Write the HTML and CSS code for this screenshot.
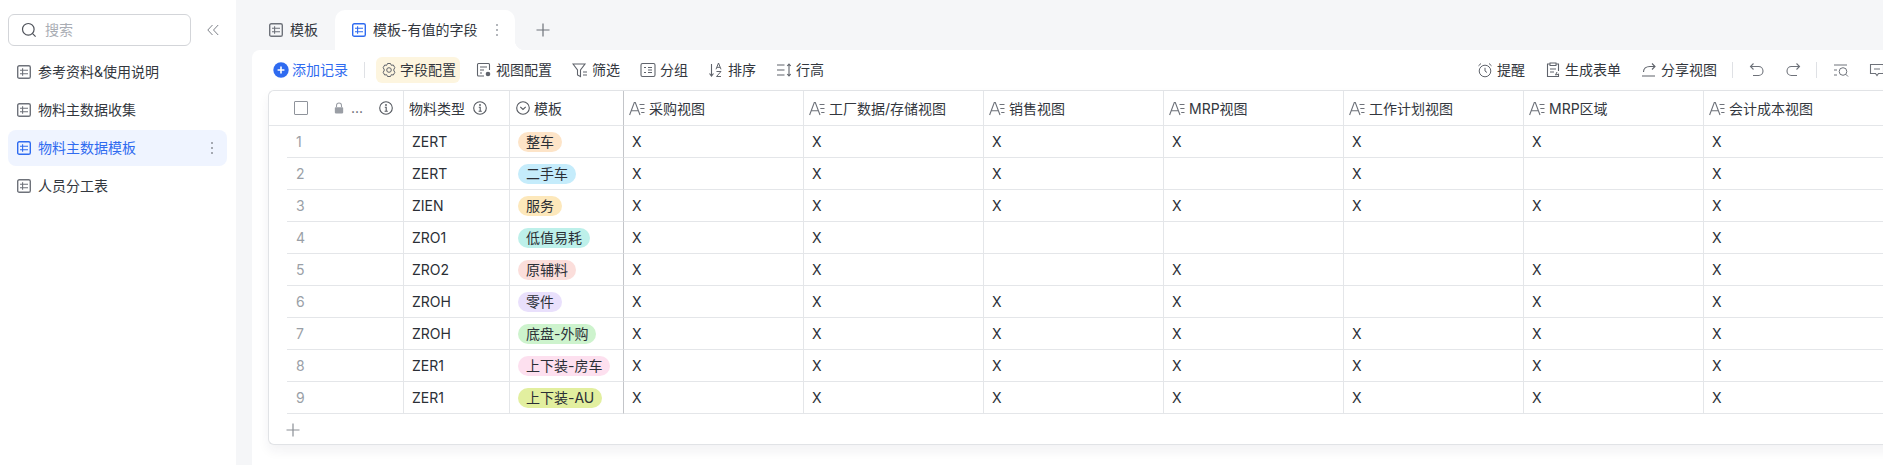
FILE: index.html
```html
<!DOCTYPE html>
<html lang="zh">
<head>
<meta charset="utf-8">
<title>物料主数据模板</title>
<link rel="stylesheet" href="styles.css">
</head>
<body>
<svg class="defs" width="0" height="0">
  <symbol id="sheet" viewBox="0 0 14 14"><rect x="0.7" y="0.7" width="12.6" height="12.6" rx="1.6" fill="none" stroke="currentColor" stroke-width="1.4"/><path d="M3 5.200h8M3 8.800h8M5.600 3.200v7.600" fill="none" stroke="currentColor" stroke-width="1.100"/></symbol>
  <symbol id="textf" viewBox="0 0 16 15"><path d="M.6 14 5.300 1.500h1L11 14M2.400 9.800h7" fill="none" stroke="currentColor" stroke-width="1.100"/><path d="M10.500 3.500h5M11.300 7.500h4.200M12.200 11.500h3.300" fill="none" stroke="currentColor" stroke-width="1.100"/></symbol>
  <symbol id="info" viewBox="0 0 14 14"><circle cx="7" cy="7" r="6.3" fill="none" stroke="currentColor" stroke-width="1.1"/><path d="M5.8 6.2H7.2V10.2M5.6 10.2h3.2" fill="none" stroke="currentColor" stroke-width="1.1"/><circle cx="7" cy="4" r=".9" fill="currentColor"/></symbol>
  <symbol id="dots" viewBox="0 0 4 14"><circle cx="2" cy="2" r="1" fill="currentColor"/><circle cx="2" cy="7" r="1" fill="currentColor"/><circle cx="2" cy="12" r="1" fill="currentColor"/></symbol>
</svg>

<div class="app">
  <aside class="sidebar">
    <div class="search-row">
      <div class="search">
        <svg class="ic-search" viewBox="0 0 16 16"><circle cx="7.3" cy="7.3" r="5.8" fill="none" stroke="currentColor" stroke-width="1.2"/><path d="M11.6 11.6 14.6 14.6" stroke="currentColor" stroke-width="1.2"/></svg>
        <span>搜索</span>
      </div>
      <svg class="collapse" viewBox="0 0 12 12"><path d="M5.5 1 .8 6l4.7 5M11.2 1 6.5 6l4.7 5" fill="none" stroke="currentColor" stroke-width="1"/></svg>
    </div>
    <nav class="nav">
      <div class="nav-item"><svg class="ic14"><use href="#sheet"/></svg><span>参考资料&amp;使用说明</span></div>
      <div class="nav-item"><svg class="ic14"><use href="#sheet"/></svg><span>物料主数据收集</span></div>
      <div class="nav-item active"><svg class="ic14"><use href="#sheet"/></svg><span>物料主数据模板</span><svg class="dots"><use href="#dots"/></svg></div>
      <div class="nav-item"><svg class="ic14"><use href="#sheet"/></svg><span>人员分工表</span></div>
    </nav>
  </aside>

  <main class="main">
    <div class="tabs">
      <div class="tab"><svg class="ic14"><use href="#sheet"/></svg><span>模板</span></div>
      <div class="tab current"><svg class="ic14 blue"><use href="#sheet"/></svg><span>模板-有值的字段</span><svg class="dots"><use href="#dots"/></svg></div>
      <svg class="tab-add" viewBox="0 0 14 14"><path d="M7 .5v13M.5 7h13" stroke="currentColor" stroke-width="1.2"/></svg>
    </div>

    <section class="card">
      <div class="toolbar">
        <div class="tool add"><svg class="ic15" viewBox="0 0 15 15"><circle cx="7.5" cy="7.5" r="7.2" fill="#2f6bf0"/><path d="M7.5 4.3v6.4M4.3 7.5h6.4" stroke="#fff" stroke-width="1.5"/></svg><span>添加记录</span></div>
        <i class="sep"></i>
        <div class="tool field"><svg class="ic15" viewBox="0 0 16 16"><path d="M6.500 1.500h3L10.300 3.300 12.300 3l1.500 2.600L12.600 8l1.200 2.400-1.500 2.600-2-.3-.8 1.800h-3l-.8-1.800-2 .3-1.500-2.600L3.400 8 2.200 5.600 3.700 3l2 .3Z" fill="none" stroke="currentColor" stroke-width="1"/><circle cx="8" cy="8" r="2.300" fill="none" stroke="currentColor" stroke-width="1"/></svg><span>字段配置</span></div>
        <div class="tool"><svg class="ic15" viewBox="0 0 16 16"><path d="M8 14H2.500a1 1 0 0 1-1-1V2.500a1 1 0 0 1 1-1h10a1 1 0 0 1 1 1V8" fill="none" stroke="currentColor" stroke-width="1.100"/><path d="M4 5h7M4 8h4M4 11h2" stroke="currentColor" stroke-width="1.100"/><circle cx="12" cy="12" r="2.300" fill="currentColor"/></svg><span>视图配置</span></div>
        <div class="tool"><svg class="ic15" viewBox="0 0 16 16"><path d="M1 2h12L8.500 8v6.500L5.500 13V8Z" fill="none" stroke="currentColor" stroke-width="1.100"/><path d="M11 10h4M11 13h4" stroke="currentColor" stroke-width="1.100"/></svg><span>筛选</span></div>
        <div class="tool"><svg class="ic15" viewBox="0 0 16 16"><rect x="1" y="1.500" width="14" height="13" rx="1.500" fill="none" stroke="currentColor" stroke-width="1.100"/><path d="M4 5.500h2M4 10.500h2M8 5.500h4M8 10.500h4M8 8h4" stroke="currentColor" stroke-width="1.100"/></svg><span>分组</span></div>
        <div class="tool"><svg class="ic15" viewBox="0 0 16 16"><path d="M3.500 2v12M1.500 11.500 3.500 14l2-2.500" fill="none" stroke="currentColor" stroke-width="1.100"/><path d="M8 7.300 10.500 1l2.500 6.300M9 5.300h3M8.500 9.500h4.500L8.500 14.500H13" fill="none" stroke="currentColor" stroke-width="1"/></svg><span>排序</span></div>
        <div class="tool"><svg class="ic15" viewBox="0 0 16 16"><path d="M1 3h7.500M1 8h7.500M1 13h7.500" stroke="currentColor" stroke-width="1.100"/><path d="M13 2v12M11.200 4 13 2l1.800 2M11.200 12l1.800 2 1.800-2" fill="none" stroke="currentColor" stroke-width="1.100"/></svg><span>行高</span></div>
        <div class="right">
          <div class="tool"><svg class="ic15" viewBox="0 0 16 16"><circle cx="8" cy="9" r="5.800" fill="none" stroke="currentColor" stroke-width="1"/><path d="M8 5.800V9l2 1.500M1.500 3.800 4 1.500M14.500 3.800 12 1.500" fill="none" stroke="currentColor" stroke-width="1"/></svg><span>提醒</span></div>
          <div class="tool"><svg class="ic15" viewBox="0 0 16 16"><path d="M11 2h2.500v7M13.500 12v2.500h-11V2H5" fill="none" stroke="currentColor" stroke-width="1.100"/><rect x="5" y="1" width="6" height="2.500" fill="none" stroke="currentColor" stroke-width="1"/><path d="M5 7h6M5 10h4M12 10l-1.500 3 3.500-1" fill="none" stroke="currentColor" stroke-width="1"/></svg><span>生成表单</span></div>
          <div class="tool"><svg class="ic15" viewBox="0 0 16 16"><path d="M2.500 10C2.500 6.500 5 4.500 9 4.500h4.500M11 1.500l3 3-3 3M1 14h13" fill="none" stroke="currentColor" stroke-width="1.100"/></svg><span>分享视图</span></div>
          <i class="sep"></i>
          <svg class="ic15 act" viewBox="0 0 16 16"><path d="M4.500 1.500 1.500 4.500l3 3M1.500 4.500h8a4.500 4.500 0 0 1 0 9H4" fill="none" stroke="currentColor" stroke-width="1.100"/></svg>
          <svg class="ic15 act" viewBox="0 0 16 16"><path d="M11.500 1.500 14.500 4.500l-3 3M14.500 4.500h-8a4.500 4.500 0 0 0 0 9H12" fill="none" stroke="currentColor" stroke-width="1.100"/></svg>
          <i class="sep"></i>
          <svg class="ic15 act" viewBox="0 0 16 16"><path d="M1 3h13M1 8h3M1 13h3" stroke="currentColor" stroke-width="1"/><circle cx="10" cy="9.500" r="3.800" fill="none" stroke="currentColor" stroke-width="1"/><path d="M12.800 12.300 15 14.500" stroke="currentColor" stroke-width="1"/></svg>
          <svg class="ic15 act" viewBox="0 0 16 16"><path d="M1.500 2.500h13v9H9.500L8 13.500 6.500 11.500h-5Z" fill="none" stroke="currentColor" stroke-width="1.100"/><path d="M5 7h6" stroke="currentColor" stroke-width="1"/></svg>
        </div>
      </div>

      <div class="table">
        <div class="row head">
          <div class="c c1"><span class="check"></span><svg class="lock" viewBox="0 0 12 14"><path d="M3 6V4a3 3 0 0 1 6 0v2" fill="none" stroke="currentColor" stroke-width="1.300"/><rect x="1" y="6" width="10" height="7.500" rx="1" fill="currentColor"/></svg><span class="more">...</span><svg class="ic14 info"><use href="#info"/></svg></div>
          <div class="c c2"><span>物料类型</span><svg class="ic14 info"><use href="#info"/></svg></div>
          <div class="c c3"><svg class="ic14 info" viewBox="0 0 14 14"><circle cx="7" cy="7" r="6.300" fill="none" stroke="currentColor" stroke-width="1.100"/><path d="M4.300 5.800 7 8.500l2.700-2.700" fill="none" stroke="currentColor" stroke-width="1.100"/></svg><span>模板</span></div>
          <div class="c cx"><svg class="tf"><use href="#textf"/></svg><span>采购视图</span></div>
          <div class="c cx"><svg class="tf"><use href="#textf"/></svg><span>工厂数据/存储视图</span></div>
          <div class="c cx"><svg class="tf"><use href="#textf"/></svg><span>销售视图</span></div>
          <div class="c cx"><svg class="tf"><use href="#textf"/></svg><span>MRP视图</span></div>
          <div class="c cx"><svg class="tf"><use href="#textf"/></svg><span>工作计划视图</span></div>
          <div class="c cx"><svg class="tf"><use href="#textf"/></svg><span>MRP区域</span></div>
          <div class="c cx"><svg class="tf"><use href="#textf"/></svg><span>会计成本视图</span></div>
        </div>
        <div class="row"><div class="c c1">1</div><div class="c c2">ZERT</div><div class="c c3"><span class="pill p-orange">整车</span></div><div class="c cx">X</div><div class="c cx">X</div><div class="c cx">X</div><div class="c cx">X</div><div class="c cx">X</div><div class="c cx">X</div><div class="c cx">X</div></div>
        <div class="row"><div class="c c1">2</div><div class="c c2">ZERT</div><div class="c c3"><span class="pill p-blue">二手车</span></div><div class="c cx">X</div><div class="c cx">X</div><div class="c cx">X</div><div class="c cx"></div><div class="c cx">X</div><div class="c cx"></div><div class="c cx">X</div></div>
        <div class="row"><div class="c c1">3</div><div class="c c2">ZIEN</div><div class="c c3"><span class="pill p-yellow">服务</span></div><div class="c cx">X</div><div class="c cx">X</div><div class="c cx">X</div><div class="c cx">X</div><div class="c cx">X</div><div class="c cx">X</div><div class="c cx">X</div></div>
        <div class="row"><div class="c c1">4</div><div class="c c2">ZRO1</div><div class="c c3"><span class="pill p-teal">低值易耗</span></div><div class="c cx">X</div><div class="c cx">X</div><div class="c cx"></div><div class="c cx"></div><div class="c cx"></div><div class="c cx"></div><div class="c cx">X</div></div>
        <div class="row"><div class="c c1">5</div><div class="c c2">ZRO2</div><div class="c c3"><span class="pill p-red">原辅料</span></div><div class="c cx">X</div><div class="c cx">X</div><div class="c cx"></div><div class="c cx">X</div><div class="c cx"></div><div class="c cx">X</div><div class="c cx">X</div></div>
        <div class="row"><div class="c c1">6</div><div class="c c2">ZROH</div><div class="c c3"><span class="pill p-purple">零件</span></div><div class="c cx">X</div><div class="c cx">X</div><div class="c cx">X</div><div class="c cx">X</div><div class="c cx"></div><div class="c cx">X</div><div class="c cx">X</div></div>
        <div class="row"><div class="c c1">7</div><div class="c c2">ZROH</div><div class="c c3"><span class="pill p-green">底盘-外购</span></div><div class="c cx">X</div><div class="c cx">X</div><div class="c cx">X</div><div class="c cx">X</div><div class="c cx">X</div><div class="c cx">X</div><div class="c cx">X</div></div>
        <div class="row"><div class="c c1">8</div><div class="c c2">ZER1</div><div class="c c3"><span class="pill p-pink">上下装-房车</span></div><div class="c cx">X</div><div class="c cx">X</div><div class="c cx">X</div><div class="c cx">X</div><div class="c cx">X</div><div class="c cx">X</div><div class="c cx">X</div></div>
        <div class="row"><div class="c c1">9</div><div class="c c2">ZER1</div><div class="c c3"><span class="pill p-lime">上下装-AU</span></div><div class="c cx">X</div><div class="c cx">X</div><div class="c cx">X</div><div class="c cx">X</div><div class="c cx">X</div><div class="c cx">X</div><div class="c cx">X</div></div>
        <div class="add-row"><svg viewBox="0 0 14 14"><path d="M7 .5v13M.5 7h13" stroke="currentColor" stroke-width="1.200"/></svg></div>
      </div>
    </section>
  </main>
</div>
</body>
</html>
```

FILE: styles.css
```css
* { box-sizing: border-box; }
html, body { margin: 0; height: 100%; overflow: hidden; }
body {
  font-family: Inter, "Noto Sans CJK SC", sans-serif;
  font-size: 14px;
  color: #262a32;
  background: #fff;
}
.defs { position: absolute; }
svg { display: block; flex: none; }
.app { display: flex; height: 465px; width: 1883px; }

/* sidebar */
.sidebar { width: 236px; flex: none; background: #fff; padding: 14px 9px 0 8px; }
.search-row { display: flex; align-items: center; }
.search {
  width: 183px; height: 32px;
  display: flex; align-items: center; gap: 8px;
  padding-left: 12px;
  border: 1px solid #d3d5d9; border-radius: 6px;
  color: #a9adb4;
}
.search span { padding-bottom: 2px; }
.ic-search { width: 16px; height: 16px; color: #4d5159; }
.collapse { width: 12px; height: 12px; margin-left: 16px; color: #7d8188; }
.nav { margin-top: 8px; display: flex; flex-direction: column; gap: 2px; }
.nav-item {
  height: 36px; width: 219px;
  display: flex; align-items: center; gap: 7px;
  padding: 0 9px;
  border-radius: 8px;
  color: #33373e;
}
.nav-item span { padding-bottom: 2px; }
.nav-item .ic14 { color: #6e727a; }
.nav-item.active { background: #eff4ff; color: #2f6bf0; }
.nav-item.active .ic14 { color: #2f6bf0; }
.nav-item .dots { margin-left: auto; margin-right: 4px; color: #8d9199; }
.ic14 { width: 14px; height: 14px; }
.ic15 { width: 16px; height: 16px; }
.dots { width: 4px; height: 14px; }
.blue { color: #2f6bf0; }

/* main */
.main { width: 1647px; flex: none; background: #f5f6f8; padding-left: 16px; overflow: hidden; }
.tabs { height: 50px; display: flex; align-items: flex-end; padding-left: 17px; }
.tab { height: 40px; display: flex; align-items: center; gap: 7px; color: #33373e; }
.tab span { padding-bottom: 2px; }
.tab .ic14 { color: #6e727a; }
.tab .ic14.blue { color: #2f6bf0; }
.tab.current {
  position: relative;
  width: 180px; margin-left: 17px;
  padding-left: 17px;
  background: #fff;
  border-radius: 10px 10px 0 0;
}
.tab.current .dots { margin-left: 11px; color: #9a9ea5; }
.tab.current::after {
  content: ""; position: absolute; left: 100%; bottom: 0; width: 10px; height: 10px;
  background: radial-gradient(circle at 100% 0, transparent 10px, #fff 10.5px);
}
.tab-add { width: 14px; height: 14px; margin: 0 0 13px 21px; color: #6e727a; }

.card { background: #fff; height: 415px; border-radius: 8px 0 0 0; overflow: hidden; }
.toolbar { height: 40px; display: flex; align-items: center; padding-left: 21px; color: #33373e; }
.tool { display: flex; align-items: center; gap: 4px; margin-right: 20px; white-space: nowrap; }
.tool span { padding-bottom: 2px; }
.tool svg { color: #5f636b; }
.add { color: #2f6bf0; margin-right: 16px; gap: 3px; }
.sep { width: 1px; height: 16px; background: #dfe1e5; flex: none; }
.field {
  height: 26px; padding: 0 4px 0 5px; margin-left: 11px; margin-right: 16px;
  background: #fdf5df; border-radius: 6px; gap: 3px;
}
.right { margin-left: auto; margin-right: -2px; display: flex; align-items: center; flex: none; }
.right .sep { margin: 0 16px 0 -5px; }
.right .act { color: #6e727a; margin-right: 20px; }
.right .act:last-child { margin-right: 0; }

/* table */
.table {
  margin-left: 16px; width: 1700px; height: 355px;
  border: 1px solid #e1e3e6; border-right: 0; border-radius: 6px 0 0 6px;
  box-shadow: 0 6px 12px rgba(30, 40, 60, .06);
  background: #fff;
}
.row { display: flex; height: 32px; }
.c {
  display: flex; align-items: center;
  border-bottom: 1px solid #e4e6e9; border-right: 1px solid #e4e6e9;
  padding-left: 8px;
  color: #2b2f36;
  white-space: nowrap;
}
.c1 { width: 117px; margin-left: 18px; color: #9a9fa7; font-size: 14px; padding-left: 9px; }
.c2 { width: 106px; }
.c3 { width: 114px; padding-left: 8px; border-right-color: #c3c5c9; }
.cx { width: 180px; padding-left: 8px; }

.head { height: 35px; }
.head .c { color: #33373e; }
.head .c1 { width: 135px; margin-left: 0; padding-left: 25px; }
.head .c2 { gap: 8px; padding-left: 5px; }
.head .c3 { gap: 4px; padding-left: 6px; }
.head .cx { padding-left: 5px; gap: 4px; color: #33373e; }
.head span:not(.check) { padding-bottom: 1px; }
.check { width: 14px; height: 14px; border: 1.5px solid #8f939b; border-radius: 1px; flex: none; }
.lock { width: 10px; height: 12px; margin-left: 26px; color: #9a9ea5; }
.more { margin-left: 7px; width: 21px; color: #5f636b; }
.info { color: #54585f; }
.head .c1 .info { margin-left: 7px; }
.tf { width: 16px; height: 15px; color: #6e727a; }

.pill { height: 20px; line-height: 19px; padding: 0 8px; border-radius: 10px; color: #2b2f36; }
.p-orange { background: #fde4c8; }
.p-blue { background: #c5ecfb; }
.p-yellow { background: #fde8bb; }
.p-teal { background: #bdf0ea; }
.p-red { background: #fbdedb; }
.p-purple { background: #e9e0fc; }
.p-green { background: #cdf3cd; }
.p-pink { background: #fde0ef; }
.p-lime { background: #e2ef9f; }

.add-row { height: 31px; padding: 9px 0 0 17px; color: #8b8f96; }
.add-row svg { width: 14px; height: 14px; }
```
